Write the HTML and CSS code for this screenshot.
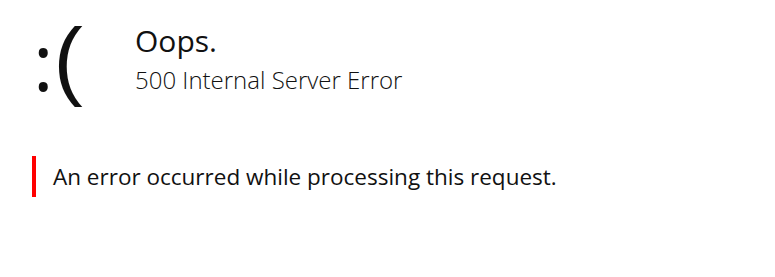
FILE: index.html
```html
<!DOCTYPE html>
<html>
<head>
<meta charset="utf-8">
<link rel="stylesheet" href="styles.css">
</head>
<body>
<div class="page">
  <div class="header">
    <div class="face"><span class="colon">:</span><span class="paren">(</span></div>
    <div class="titles">
      <h1 class="title">Oops.</h1>
      <h2 class="subtitle">500 Internal Server Error</h2>
    </div>
  </div>
  <p class="message">An error occurred while processing this request.</p>
</div>
</body>
</html>
```

FILE: styles.css
```css
html, body {
  margin: 0;
  padding: 0;
  background: #ffffff;
}
body {
  font-family: "Open Sans", "Noto Sans", sans-serif;
  color: #111111;
}
.page {
  padding: 22px 0 0 32px;
}
.header {
  display: flex;
  align-items: flex-start;
}
.face {
  display: flex;
  align-items: flex-start;
  width: 103px;
  margin-top: -14px;
  margin-bottom: -2px;
  padding-left: 1px;
  box-sizing: border-box;
}
.colon {
  font-size: 78px;
  font-weight: 400;
  line-height: normal;
}
.paren {
  font-family: "Liberation Sans", Arial, sans-serif;
  font-size: 88px;
  font-weight: 400;
  line-height: normal;
}
.titles {
  display: flex;
  flex-direction: column;
  padding-top: 1px;
}
.title {
  margin: 0;
  font-size: 30px;
  font-weight: 400;
  line-height: 36px;
}
.subtitle {
  margin: 0;
  font-size: 24px;
  font-weight: 300;
  line-height: 42px;
}
.message {
  margin: 44px 0 0 0;
  border-left: 4px solid #ff0000;
  padding: 8px 0 8px 17px;
  font-size: 22.5px;
  line-height: 25px;
}
```
